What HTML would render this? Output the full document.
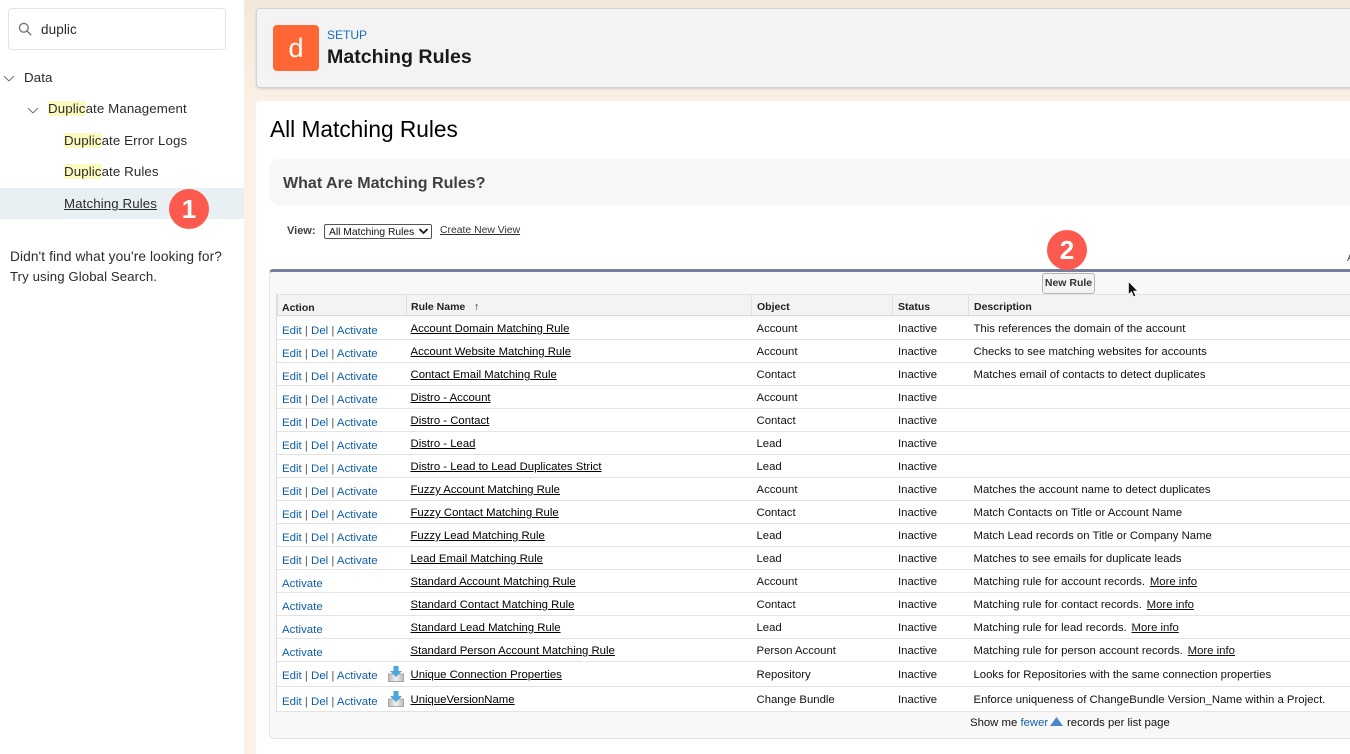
<!DOCTYPE html>
<html><head><meta charset="utf-8">
<style>
html,body{margin:0;padding:0}
body{width:1350px;height:754px;position:relative;overflow:hidden;background:linear-gradient(#f3e8db,#fdf1e7 120px);font-family:"Liberation Sans",sans-serif;color:#000}
.a{position:absolute;white-space:nowrap}
#side{left:0;top:0;width:244px;height:754px;background:#fff}
.nav{font-size:13.3px;color:#2b2b2b;line-height:18px;letter-spacing:.1px;margin-top:1px}
mark{background:#fbfbc0;color:inherit}
.r{position:absolute;left:277px;width:1073px;background:#fff;border-bottom:1px solid #e3e3e3;font-size:11.35px;line-height:14px;color:#111}
.r span,.r u{position:absolute;white-space:nowrap;margin-top:1px}
.r u{margin-top:0}
.r .d u{margin-left:-1.5px}
.act{left:5px;color:#0f5fa8;font-size:11.45px}
.act i{font-style:normal;color:#555}
.n{left:133.5px;color:#000}
.o{left:479.5px}
.s{left:621px}
.d{left:696.5px}
.h{position:absolute;top:294px;height:22px;background:#f2f3f3;border-right:1px solid #dfe0e1;font-size:10.5px;font-weight:bold;line-height:24px;color:#222;padding-left:5px;box-sizing:border-box;border-bottom:1px solid #d6d7d8;border-top:1px solid #e3e3e3}
.badge{position:absolute;width:40px;height:40px;border-radius:50%;background:#fd5a4f;color:#fff;font-size:26px;font-weight:bold;text-align:center;line-height:40px}
</style></head><body>

<div class="a" id="side"></div>
<div class="a" style="left:8px;top:8px;width:216px;height:40px;border:1px solid #e3e3e3;border-radius:4px;background:#fff"></div>
<svg class="a" style="left:17px;top:21px" width="16" height="16" viewBox="0 0 16 16" fill="none" stroke="#757575" stroke-width="1.4"><circle cx="6.8" cy="6.8" r="4.4"/><path d="M10 10L13.800 13.800" stroke-linecap="round"/></svg>
<div class="a nav" style="left:41px;top:20px;font-size:13.5px">duplic</div>

<svg class="a" style="left:2px;top:74px" width="14" height="10" viewBox="0 0 14 10" fill="none" stroke="#777" stroke-width="1.1"><path d="M2 2l5 5 5-5"/></svg>
<div class="a nav" style="left:24px;top:68px">Data</div>
<svg class="a" style="left:26px;top:106px" width="14" height="10" viewBox="0 0 14 10" fill="none" stroke="#777" stroke-width="1.1"><path d="M2 2l5 5 5-5"/></svg>
<div class="a nav" style="left:48px;top:99px"><mark>Duplic</mark>ate Management</div>
<div class="a nav" style="left:64px;top:131px"><mark>Duplic</mark>ate Error Logs</div>
<div class="a nav" style="left:64px;top:162px"><mark>Duplic</mark>ate Rules</div>
<div class="a" style="left:0;top:188px;width:244px;height:31px;background:#e8f0f4"></div>
<div class="a nav" style="left:64px;top:194px;text-decoration:underline">Matching Rules</div>
<div class="a nav" style="left:10px;top:246px;line-height:20px;font-size:13.7px">Didn't find what you're looking for?</div>
<div class="a nav" style="left:10px;top:266px;line-height:20px;font-size:13.2px">Try using Global Search.</div>

<div class="a" style="left:256px;top:8px;width:1100px;height:78px;background:#f3f3f3;border:1px solid #d2d2d2;border-radius:4px;box-shadow:0 1px 2px rgba(0,0,0,.15)"></div>
<div class="a" style="left:273px;top:25px;width:46px;height:46px;border-radius:4px;background:#fe6633;color:#fff;font-size:27px;line-height:46px;text-align:center">d</div>
<div class="a" style="left:327px;top:28px;font-size:12px;line-height:15px;color:#1b6fb5">SETUP</div>
<div class="a" style="left:327px;top:44px;font-size:19.6px;font-weight:bold;line-height:26px;color:#1a1a1a">Matching Rules</div>

<div class="a" style="left:256px;top:101px;width:1100px;height:653px;background:#fff;border-radius:4px 4px 0 0"></div>
<div class="a" style="left:270px;top:115px;font-size:22.7px;line-height:28px;color:#000">All Matching Rules</div>
<div class="a" style="left:269px;top:159px;width:1090px;height:46px;background:#f7f7f7;border-radius:10px"></div>
<div class="a" style="left:283px;top:173px;font-size:16.05px;font-weight:bold;line-height:20px;color:#404040">What Are Matching Rules?</div>

<div class="a" style="left:287px;top:224px;font-size:11px;font-weight:bold;line-height:14px;color:#3e3e3e">View:</div>
<div class="a" style="left:324px;top:224px;width:102px;height:13px;border:1px solid #555;border-radius:2px;font-size:10.3px;line-height:15px;background:#fff;color:#111;padding-left:4px">All Matching Rules</div>
<svg class="a" style="left:418px;top:227px" width="11" height="9" viewBox="0 0 11 9" fill="none" stroke="#111" stroke-width="1.7"><path d="M1.500 2l4 4 4-4"/></svg>
<div class="a" style="left:440px;top:224px;font-size:10.4px;line-height:14px;color:#333;text-decoration:underline">Create New View</div>
<div class="a" style="left:1347px;top:251px;font-size:11px;line-height:14px;color:#444">A</div>

<div class="a" style="left:269px;top:269px;width:1090px;height:470px;box-sizing:border-box;background:#f8f8f8;border-top:3px solid #787f9e;border-left:1px solid #e6e6e6;border-bottom:1px solid #e0e0e0;border-radius:4px"></div>

<div class="a" style="left:1042px;top:273px;width:53px;height:21px;box-sizing:border-box;border:1px solid #b5b5b5;border-radius:3px;background:#f4f4f4;font-size:10.5px;font-weight:bold;line-height:19px;text-align:center;color:#333">New Rule</div>

<div class="h" style="left:277px;width:130px;border-left:1px solid #e0e0e0;padding-left:4px;line-height:26px">Action</div>
<div class="h" style="left:407px;width:345px;line-height:24px;padding-left:4px">Rule Name &nbsp;&nbsp;<span style="font-weight:normal">↑</span></div>
<div class="h" style="left:752px;width:141px;line-height:24px">Object</div>
<div class="h" style="left:893px;width:76px;line-height:24px">Status</div>
<div class="h" style="left:969px;width:390px;line-height:24px;border-right:0">Description</div>

<div class="r" style="top:317px;height:22px"><span class="act" style="top:6px">Edit <i>|</i> Del <i>|</i> Activate</span><span class="n" style="top:4px"><u style="position:static">Account Domain Matching Rule</u></span><span class="o" style="top:4px">Account</span><span class="s" style="top:4px">Inactive</span><span class="d" style="top:4px">This references the domain of the account</span></div>
<div class="r" style="top:340px;height:22px"><span class="act" style="top:6px">Edit <i>|</i> Del <i>|</i> Activate</span><span class="n" style="top:4px"><u style="position:static">Account Website Matching Rule</u></span><span class="o" style="top:4px">Account</span><span class="s" style="top:4px">Inactive</span><span class="d" style="top:4px">Checks to see matching websites for accounts</span></div>
<div class="r" style="top:363px;height:22px"><span class="act" style="top:6px">Edit <i>|</i> Del <i>|</i> Activate</span><span class="n" style="top:4px"><u style="position:static">Contact Email Matching Rule</u></span><span class="o" style="top:4px">Contact</span><span class="s" style="top:4px">Inactive</span><span class="d" style="top:4px">Matches email of contacts to detect duplicates</span></div>
<div class="r" style="top:386px;height:22px"><span class="act" style="top:6px">Edit <i>|</i> Del <i>|</i> Activate</span><span class="n" style="top:4px"><u style="position:static">Distro - Account</u></span><span class="o" style="top:4px">Account</span><span class="s" style="top:4px">Inactive</span></div>
<div class="r" style="top:409px;height:22px"><span class="act" style="top:6px">Edit <i>|</i> Del <i>|</i> Activate</span><span class="n" style="top:4px"><u style="position:static">Distro - Contact</u></span><span class="o" style="top:4px">Contact</span><span class="s" style="top:4px">Inactive</span></div>
<div class="r" style="top:432px;height:22px"><span class="act" style="top:6px">Edit <i>|</i> Del <i>|</i> Activate</span><span class="n" style="top:4px"><u style="position:static">Distro - Lead</u></span><span class="o" style="top:4px">Lead</span><span class="s" style="top:4px">Inactive</span></div>
<div class="r" style="top:455px;height:22px"><span class="act" style="top:6px">Edit <i>|</i> Del <i>|</i> Activate</span><span class="n" style="top:4px"><u style="position:static">Distro - Lead to Lead Duplicates Strict</u></span><span class="o" style="top:4px">Lead</span><span class="s" style="top:4px">Inactive</span></div>
<div class="r" style="top:478px;height:22px"><span class="act" style="top:6px">Edit <i>|</i> Del <i>|</i> Activate</span><span class="n" style="top:4px"><u style="position:static">Fuzzy Account Matching Rule</u></span><span class="o" style="top:4px">Account</span><span class="s" style="top:4px">Inactive</span><span class="d" style="top:4px">Matches the account name to detect duplicates</span></div>
<div class="r" style="top:501px;height:22px"><span class="act" style="top:6px">Edit <i>|</i> Del <i>|</i> Activate</span><span class="n" style="top:4px"><u style="position:static">Fuzzy Contact Matching Rule</u></span><span class="o" style="top:4px">Contact</span><span class="s" style="top:4px">Inactive</span><span class="d" style="top:4px">Match Contacts on Title or Account Name</span></div>
<div class="r" style="top:524px;height:22px"><span class="act" style="top:6px">Edit <i>|</i> Del <i>|</i> Activate</span><span class="n" style="top:4px"><u style="position:static">Fuzzy Lead Matching Rule</u></span><span class="o" style="top:4px">Lead</span><span class="s" style="top:4px">Inactive</span><span class="d" style="top:4px">Match Lead records on Title or Company Name</span></div>
<div class="r" style="top:547px;height:22px"><span class="act" style="top:6px">Edit <i>|</i> Del <i>|</i> Activate</span><span class="n" style="top:4px"><u style="position:static">Lead Email Matching Rule</u></span><span class="o" style="top:4px">Lead</span><span class="s" style="top:4px">Inactive</span><span class="d" style="top:4px">Matches to see emails for duplicate leads</span></div>
<div class="r" style="top:570px;height:22px"><span class="act" style="top:6px">Activate</span><span class="n" style="top:4px"><u style="position:static">Standard Account Matching Rule</u></span><span class="o" style="top:4px">Account</span><span class="s" style="top:4px">Inactive</span><span class="d" style="top:4px">Matching rule for account records.&nbsp; <u style="position:static">More info</u></span></div>
<div class="r" style="top:593px;height:22px"><span class="act" style="top:6px">Activate</span><span class="n" style="top:4px"><u style="position:static">Standard Contact Matching Rule</u></span><span class="o" style="top:4px">Contact</span><span class="s" style="top:4px">Inactive</span><span class="d" style="top:4px">Matching rule for contact records.&nbsp; <u style="position:static">More info</u></span></div>
<div class="r" style="top:616px;height:22px"><span class="act" style="top:6px">Activate</span><span class="n" style="top:4px"><u style="position:static">Standard Lead Matching Rule</u></span><span class="o" style="top:4px">Lead</span><span class="s" style="top:4px">Inactive</span><span class="d" style="top:4px">Matching rule for lead records.&nbsp; <u style="position:static">More info</u></span></div>
<div class="r" style="top:639px;height:22px"><span class="act" style="top:6px">Activate</span><span class="n" style="top:4px"><u style="position:static">Standard Person Account Matching Rule</u></span><span class="o" style="top:4px">Person Account</span><span class="s" style="top:4px">Inactive</span><span class="d" style="top:4px">Matching rule for person account records.&nbsp; <u style="position:static">More info</u></span></div>
<div class="r" style="top:662px;height:24px"><span class="act" style="top:6px">Edit <i>|</i> Del <i>|</i> Activate</span><span class="n" style="top:5px"><u style="position:static">Unique Connection Properties</u></span><span class="o" style="top:5px">Repository</span><span class="s" style="top:5px">Inactive</span><span class="d" style="top:5px">Looks for Repositories with the same connection properties</span></div>
<div class="r" style="top:687px;height:24px"><span class="act" style="top:7px">Edit <i>|</i> Del <i>|</i> Activate</span><span class="n" style="top:5px"><u style="position:static">UniqueVersionName</u></span><span class="o" style="top:5px">Change Bundle</span><span class="s" style="top:5px">Inactive</span><span class="d" style="top:5px">Enforce uniqueness of ChangeBundle Version_Name within a Project.</span></div>
<div class="a" style="left:276px;top:294px;width:1px;height:418px;background:#dcdcdc"></div>

<svg class="a" style="left:388px;top:666px" width="16" height="16" viewBox="0 0 16 16"><defs><linearGradient id="t" x1="0" x2="1" y1="0" y2="0"><stop offset="0" stop-color="#b9b9b9"/><stop offset=".5" stop-color="#f2f2f2"/><stop offset="1" stop-color="#b9b9b9"/></linearGradient></defs><path d="M.5 8h15v7.500H.5z" fill="url(#t)" stroke="#a9a9a9"/><path d="M5.500 0h5v5H14L8 11 2 5h3.500z" fill="#4ba6de"/></svg>
<svg class="a" style="left:388px;top:691px" width="16" height="16" viewBox="0 0 16 16"><path d="M.5 8h15v7.500H.5z" fill="url(#t)" stroke="#a9a9a9"/><path d="M5.500 0h5v5H14L8 11 2 5h3.500z" fill="#4ba6de"/></svg>

<div class="a" style="left:970px;top:716px;font-size:11.35px;line-height:14px;color:#111">Show me <span style="color:#0f5fa8">fewer</span></div>
<svg class="a" style="left:1050px;top:717px" width="13" height="9" viewBox="0 0 13 9"><path d="M6.500 0L13 9H0z" fill="#4a86c8"/></svg>
<div class="a" style="left:1067px;top:716px;font-size:11.35px;line-height:14px;color:#111">records per list page</div>

<div class="badge" style="left:169px;top:189px">1</div>
<div class="badge" style="left:1047px;top:230px">2</div>

<svg class="a" style="left:1127px;top:281px" width="13" height="18" viewBox="0 0 13 18"><path d="M1.500 .5v13l3-2.800 2.200 5 2-.9-2.200-4.800h4.200z" fill="#111" stroke="#fff" stroke-width=".6"/></svg>

</body></html>
